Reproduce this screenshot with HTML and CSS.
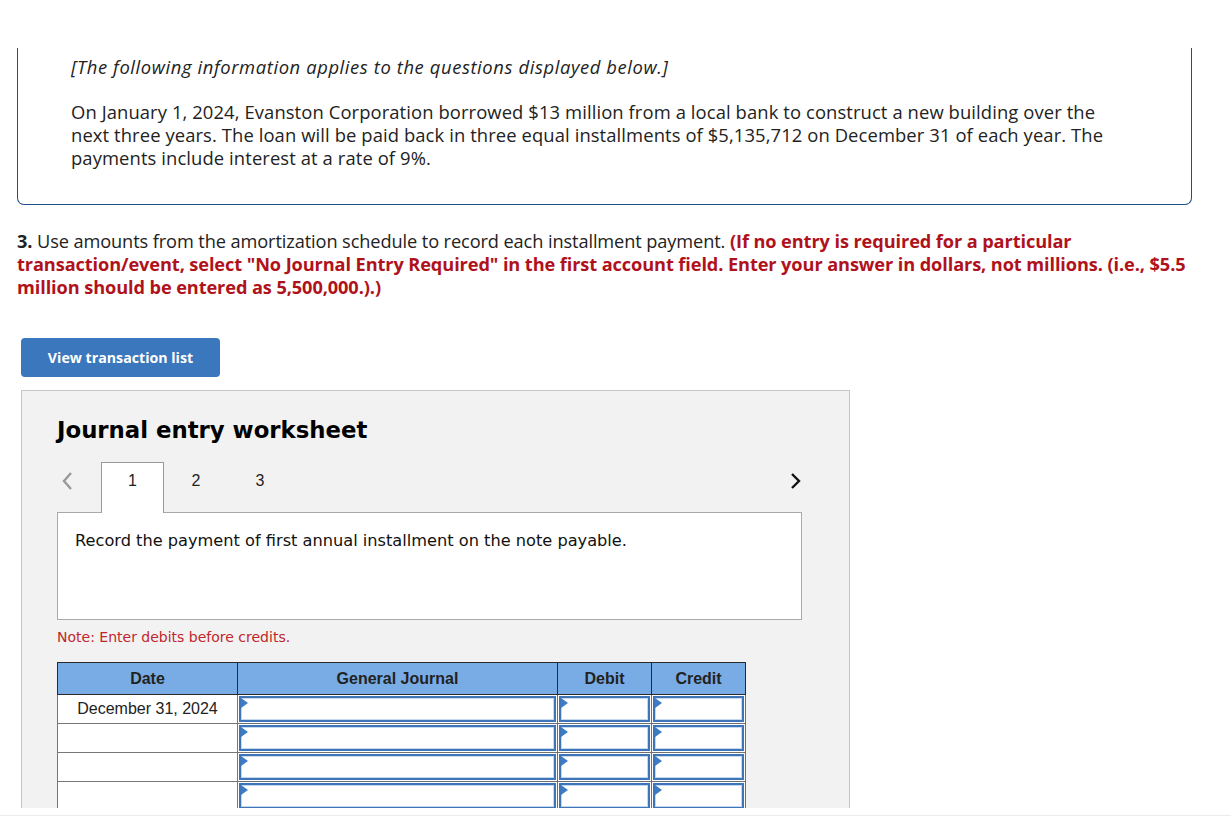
FILE: index.html
```html
<!DOCTYPE html>
<html lang="en">

<head>
    <meta charset="UTF-8">
    <meta name="viewport" content="width=device-width, initial-scale=1.0">
    <title>Journal Entry Worksheet</title>
    <link rel="stylesheet" href="styles.css">
</head>

<body>

    <div class="page">
        <!-- Shared information -->
        <div class="info-box">
            <p class="info-note">[The following information applies to the questions displayed below.]</p>
            <p class="info-text">On January 1, 2024, Evanston Corporation borrowed $13 million from a local bank to construct a new building over the next three years. The loan will be paid back in three equal installments of $5,135,712 on December 31 of each year. The payments include interest at a rate of 9%.</p>
        </div>

        <!-- Question -->
        <p class="question"><strong>3.</strong> Use amounts from the amortization schedule to record each installment payment. <span class="hint">(If no entry is required for a particular transaction/event, select "No Journal Entry Required" in the first account field. Enter your answer in dollars, not millions. (i.e., $5.5 million should be entered as 5,500,000.).)</span></p>

        <button type="button" class="btn-list">View transaction list</button>

        <!-- Worksheet -->
        <div class="worksheet">
            <h2>Journal entry worksheet</h2>

            <div class="tabs">
                <span class="arrow arrow-prev">
                    <svg width="12" height="20" viewBox="0 0 12 20"><path d="M10 2 L3 10 L10 18" fill="none" stroke="#9a9a9a" stroke-width="2.4"/></svg>
                </span>
                <div class="tab active">1</div>
                <div class="tab">2</div>
                <div class="tab">3</div>
                <span class="arrow arrow-next">
                    <svg width="12" height="20" viewBox="0 0 12 20"><path d="M2 3 L9 10 L2 17" fill="none" stroke="#111" stroke-width="2.4"/></svg>
                </span>
            </div>

            <div class="task">Record the payment of first annual installment on the note payable.</div>

            <p class="note">Note: Enter debits before credits.</p>

            <table class="journal">
                <thead>
                    <tr>
                        <th class="col-date">Date</th>
                        <th class="col-account">General Journal</th>
                        <th class="col-debit">Debit</th>
                        <th class="col-credit">Credit</th>
                    </tr>
                </thead>
                <tbody>
                    <tr>
                        <td class="date">December 31, 2024</td>
                        <td class="field"><div class="input"></div></td>
                        <td class="field"><div class="input"></div></td>
                        <td class="field"><div class="input"></div></td>
                    </tr>
                    <tr>
                        <td class="date"></td>
                        <td class="field"><div class="input"></div></td>
                        <td class="field"><div class="input"></div></td>
                        <td class="field"><div class="input"></div></td>
                    </tr>
                    <tr>
                        <td class="date"></td>
                        <td class="field"><div class="input"></div></td>
                        <td class="field"><div class="input"></div></td>
                        <td class="field"><div class="input"></div></td>
                    </tr>
                    <tr>
                        <td class="date"></td>
                        <td class="field"><div class="input"></div></td>
                        <td class="field"><div class="input"></div></td>
                        <td class="field"><div class="input"></div></td>
                    </tr>
                </tbody>
            </table>
        </div>
    </div>
    <div class="bottom-rule"></div>

</body>

</html>
```

FILE: styles.css
```css
body {
    margin: 0;
    padding: 0;
    background-color: #fff;
    font-family: 'Open Sans', 'Liberation Sans', sans-serif;
    color: #222;
}

.page {
    height: 808px;
    overflow: hidden;
    padding-top: 48px;
    box-sizing: border-box;
}

/* Info box */
.info-box {
    margin-left: 17px;
    width: 1175px;
    box-sizing: border-box;
    border: 1px solid #1d4f8a;
    border-top: none;
    border-radius: 0 0 7px 7px;
    padding: 7px 80px 35px 53px;
    font-size: 18.4px;
    line-height: 23px;
    letter-spacing: 0.1px;
}

.info-box p {
    margin: 0;
}

.info-note {
    font-style: italic;
    letter-spacing: 0.6px;
    margin-bottom: 22px !important;
}

/* Question */
.question {
    margin: 25px 0 0 17px;
    width: 1192px;
    font-size: 18.2px;
    line-height: 23px;
    letter-spacing: -0.1px;
}

.question strong {
    font-weight: 700;
}

.hint {
    color: #b0121b;
    font-weight: 700;
}

button.btn-list {
    display: block;
    margin: 39px 0 0 21px;
    width: 199px;
    height: 39px;
    background-color: #3a77bc;
    color: #fff;
    border: none;
    border-radius: 4px;
    font-family: 'Open Sans', 'Liberation Sans', sans-serif;
    font-size: 14.2px;
    font-weight: 700;
    cursor: pointer;
}

/* Worksheet */
.worksheet {
    margin: 13px 0 0 21px;
    width: 829px;
    height: 500px;
    box-sizing: border-box;
    background-color: #f2f2f2;
    border: 1px solid #c6c6c6;
    padding: 24px 0 0 35px;
    font-family: 'DejaVu Sans', Verdana, sans-serif;
}

.worksheet h2 {
    margin: 0;
    font-size: 22.8px;
    line-height: 30px;
    font-weight: bold;
    color: #000;
}

.tabs {
    display: flex;
    align-items: flex-start;
    margin-top: 17px;
    height: 50px;
    width: 745px;
    font-family: 'Liberation Sans', Arial, sans-serif;
    font-size: 16px;
}

.arrow {
    display: flex;
    align-items: center;
    padding-top: 9px;
}

.arrow-prev {
    width: 44px;
    padding-left: 4px;
    box-sizing: border-box;
}

.arrow-next {
    margin-left: auto;
}

.tab {
    width: 64px;
    height: 50px;
    display: flex;
    justify-content: center;
    padding-top: 10px;
    box-sizing: border-box;
}

.tab.active {
    background-color: #fff;
    border: 1px solid #999;
    border-bottom: none;
    height: 51px;
    margin-bottom: -1px;
    position: relative;
    z-index: 1;
    width: 63px;
    padding-top: 9px;
}

.task {
    width: 745px;
    height: 108px;
    box-sizing: border-box;
    background-color: #fff;
    border: 1px solid #aaa;
    padding: 18px 17px;
    font-size: 16.2px;
    line-height: 20px;
    color: #111;
}

.note {
    margin: 9px 0 0;
    font-size: 14px;
    line-height: 16px;
    color: #c0262c;
}

/* Journal table */
table.journal {
    margin-top: 17px;
    border-collapse: collapse;
    width: 684px;
    table-layout: fixed;
    font-family: 'Liberation Sans', Arial, sans-serif;
    font-size: 16px;
}

.journal th {
    background-color: #79ace4;
    border: 1px solid #2a2a2a;
    height: 31px;
    font-weight: bold;
    color: #222;
    padding: 0;
}

.col-date { width: 179px; }
.col-account { width: 319px; }
.col-debit { width: 93px; }
.col-credit { width: 93px; }

.journal td {
    height: 27px;
    padding: 0;
    background-color: #fff;
    border: 1px solid #777;
}

.journal td.date {
    text-align: center;
    color: #222;
}

.journal td.field {
    padding: 1px 1px 0 1px;
    vertical-align: top;
    border-color: #6f6f6f;
}

.input {
    position: relative;
    height: 26px;
    box-sizing: border-box;
    border: 2px solid #3e74b8;
    box-shadow: inset 0 0 0 1px #c4d8f0;
    background-color: #fff;
}

.input::before {
    content: "";
    position: absolute;
    left: 0;
    top: 0;
    border-top: 5px solid transparent;
    border-bottom: 5px solid transparent;
    border-left: 7px solid #3d7bc5;
}

.bottom-rule {
    margin-top: 7px;
    border-top: 1px solid #ececec;
}
```
